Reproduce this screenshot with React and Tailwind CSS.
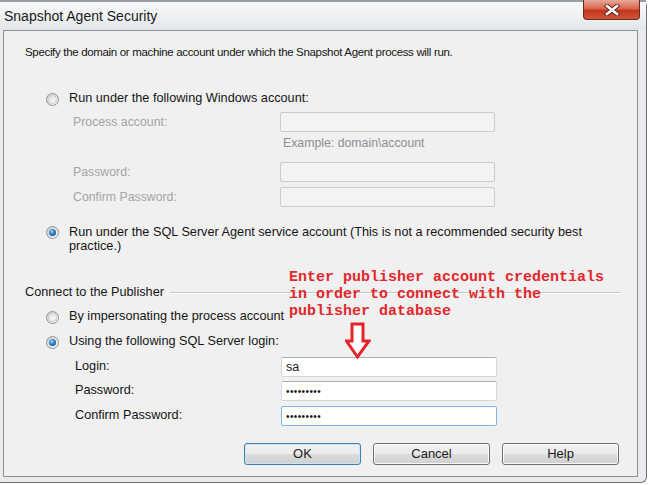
import React from "react";

const Radio = ({ checked }) => (
  <span className="flex h-[13px] w-[13px] shrink-0 items-center justify-center rounded-full border border-[#8f9296] bg-[linear-gradient(135deg,#cfcfcf,#f7f7f7)]">
    {checked ? (
      <span className="h-[7px] w-[7px] rounded-full bg-[radial-gradient(circle_at_40%_35%,#9ad6f8_0%,#2f7dc6_45%,#0e3d84_100%)]" />
    ) : (
      <span className="h-[9px] w-[9px] rounded-full border border-[#cdcdcd] bg-[linear-gradient(135deg,#e2e2e2,#fbfbfb)]" />
    )}
  </span>
);

// text box, disabled ones keep the dialog grey
const Box = ({ value, disabled, focused, width }) => (
  <div
    className={`flex h-[20px] items-center rounded-[2px] border pl-[4px] text-[12.5px] text-[#1a1a1a] ${width} ${
      disabled
        ? "border-[#cbcbcb] bg-[#f3f3f3]"
        : focused
        ? "border-[#7eb4ea] bg-[#fffffb]"
        : "border-[#d5d7dc] border-t-[#abadb3] bg-white"
    }`}
  >
    {value}
  </div>
);

const Button = ({ children, primary }) => (
  <div
    className={`flex h-[22px] w-[117px] items-center justify-center rounded-[3px] border bg-[linear-gradient(#f2f2f2_0%,#ebebeb_50%,#dddddd_51%,#cfcfcf_100%)] text-[13px] text-[#1a1a1a] ${
      primary
        ? "border-[#3c7fb1] shadow-[inset_0_0_0_1px_#c4e6fa]"
        : "border-[#707070] shadow-[inset_0_0_0_1px_#fbfbfb]"
    }`}
  >
    {children}
  </div>
);

const App = () => {
  return (
    <div className="relative h-[485px] w-[650px] overflow-hidden bg-white font-['Liberation_Sans',Arial,sans-serif]">
      <div className="relative flex h-[483px] w-[647px] flex-col rounded-r-[6px] border-r border-b border-[#6c7075] bg-[#e9ebee]">
        {/* Title bar */}
        <div className="flex h-[30px] items-center border-t-2 border-[#9a9da1] bg-[linear-gradient(#f6f7f8_0%,#eef0f2_55%,#e2e5e8_100%)] pl-[4px] text-[14px] text-[#1b1b1b]">
          Snapshot Agent Security
        </div>

        {/* Close button */}
        <div className="absolute left-[583px] top-0 flex h-[20px] w-[57px] items-center justify-center rounded-b-[4px] border border-t-0 border-[#6b2a1d] bg-[linear-gradient(#e9a899_0%,#d8674f_45%,#c2381c_55%,#d0543a_100%)]">
          <svg width="16" height="12" viewBox="0 0 16 12">
            <path d="M3 2 L13 10 M13 2 L3 10" stroke="#5a2418" strokeWidth="4.4" strokeLinecap="square" />
            <path d="M3 2 L13 10 M13 2 L3 10" stroke="#ffffff" strokeWidth="2.6" strokeLinecap="square" />
          </svg>
        </div>

        {/* Client area */}
        <div className="relative ml-[3px] flex h-[447px] w-[635px] flex-col border border-[#8e9094] bg-[#f0f0f0] text-[12.7px] text-[#151515]">
          <div className="ml-[21px] mt-[14px] h-[15px] text-[11.5px] leading-[15px] tracking-[-0.33px]">
            Specify the domain or machine account under which the Snapshot Agent process will run.
          </div>

          <div className="ml-[42px] mt-[31px] flex h-[16px] items-center gap-[10px]">
            <Radio />
            <span>Run under the following Windows account:</span>
          </div>

          <div className="ml-[69px] mt-[5px] flex h-[20px] items-center text-[12.3px] text-[#a4a4a4]">
            <span className="w-[207px]">Process account:</span>
            <Box disabled width="w-[215px]" />
          </div>
          <div className="ml-[279px] mt-[4px] h-[14px] text-[12.3px] leading-[14px] text-[#8f8f8f]">
            Example: domain\account
          </div>
          <div className="ml-[69px] mt-[12px] flex h-[20px] items-center text-[12.3px] text-[#a4a4a4]">
            <span className="w-[207px]">Password:</span>
            <Box disabled width="w-[215px]" />
          </div>
          <div className="ml-[69px] mt-[5px] flex h-[20px] items-center text-[12.3px] text-[#a4a4a4]">
            <span className="w-[207px]">Confirm Password:</span>
            <Box disabled width="w-[215px]" />
          </div>

          <div className="ml-[42px] mt-[18px] flex items-start gap-[10px]">
            <span className="mt-[1px]">
              <Radio checked />
            </span>
            <span className="w-[535px] leading-[14px]">
              Run under the SQL Server Agent service account (This is not a recommended security best practice.)
            </span>
          </div>

          <div className="ml-[21px] mr-[17px] mt-[33px] flex h-[14px] items-center">
            <span>Connect to the Publisher</span>
            <span className="ml-[6px] h-[2px] flex-1 border-t border-b border-t-[#c6c6c6] border-b-white" />
          </div>

          <div className="ml-[42px] mt-[9px] flex h-[16px] items-center gap-[10px]">
            <Radio />
            <span>By impersonating the process account</span>
          </div>
          <div className="ml-[42px] mt-[9px] flex h-[16px] items-center gap-[10px]">
            <Radio checked />
            <span>Using the following SQL Server login:</span>
          </div>

          <div className="ml-[71px] mt-[7px] flex h-[20px] items-center">
            <span className="w-[206px]">Login:</span>
            <Box value="sa" width="w-[216px]" />
          </div>
          <div className="ml-[71px] mt-[4px] flex h-[20px] items-center">
            <span className="w-[206px]">Password:</span>
            <Box value={<span className="text-[10px] tracking-[0.4px]">•••••••••</span>} width="w-[216px]" />
          </div>
          <div className="ml-[71px] mt-[5px] flex h-[20px] items-center">
            <span className="w-[206px]">Confirm Password:</span>
            <Box focused value={<span className="text-[10px] tracking-[0.4px]">•••••••••</span>} width="w-[216px]" />
          </div>

          <div className="mt-[17px] flex justify-end gap-[12px] pr-[18px]">
            <Button primary>OK</Button>
            <Button>Cancel</Button>
            <Button>Help</Button>
          </div>

          {/* annotation laid over the dialog */}
          <div className="absolute left-[285px] top-[238px] font-['Liberation_Mono','Courier_New',monospace] text-[15px] font-bold leading-[17px] text-[#e3282b]">
            <div>Enter publisher account credentials</div>
            <div>in order to connect with the</div>
            <div>publisher database</div>
          </div>
          <svg className="absolute left-[341px] top-[291px]" width="26" height="38" viewBox="0 0 26 38">
            <path d="M7 2 L18 2 L18 19 L24 19 L12.5 35 L1.5 19 L7 19 Z" fill="#ffffff" stroke="#e3242a" strokeWidth="3" strokeLinejoin="miter" />
          </svg>
        </div>
      </div>
    </div>
  );
};

export default App;
